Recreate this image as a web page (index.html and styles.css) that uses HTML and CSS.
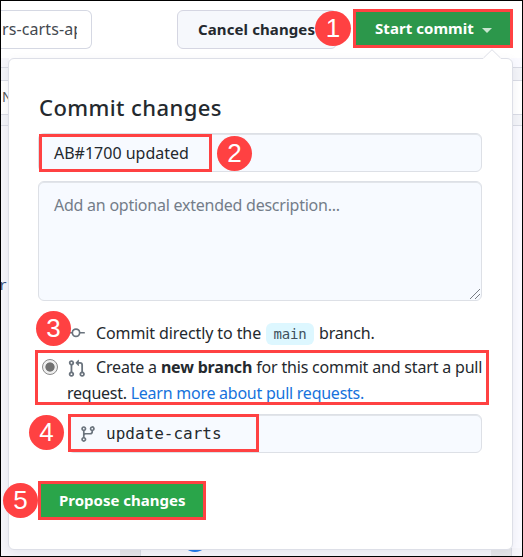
FILE: index.html
```html
<!DOCTYPE html>
<html lang="en">
<head>
<meta charset="utf-8">
<title>Commit changes</title>
<link rel="stylesheet" href="styles.css">
</head>
<body>
<div class="page">
  <header class="toolbar">
    <div class="filename"><span>rs-carts-ap</span></div>
    <div class="cancel">Cancel changes</div>
    <div class="start">Start commit <i class="caret"></i></div>
  </header>
  <div class="editor">
    <div class="tab-line"></div>
    <div class="tab-select">N</div>
    <div class="tab-line last"></div>
    <div class="code">r</div>
  </div>
  <div class="bottom"><div class="scrollbar"></div><div class="side"><i class="avatar"></i></div><div class="scrollbar end"></div></div>

  <section class="popover">
    <svg class="arrow" width="18" height="10" viewBox="0 0 18 10"><path d="M0 9.5 9 .7 18 9.5V10H0z" fill="#fff"/><path d="M.5 9 9 .7 17.5 9" fill="none" stroke="#dddfe7"/></svg>
    <h1>Commit changes</h1>
    <div class="field summary"><span>AB#1700 updated</span></div>
    <div class="field description"><span>Add an optional extended description...</span>
      <svg class="grip" width="12" height="12" viewBox="0 0 12 12"><path d="M1 11 11 1M6 11l5-5" stroke="#777b82" fill="none"/></svg>
    </div>
    <div class="option direct">
      <svg class="icon" width="18" height="18" viewBox="0 0 16 16"><path fill-rule="evenodd" d="M10.5 7.75a2.5 2.5 0 1 1-5 0 2.5 2.5 0 0 1 5 0Zm1.43.75a4.002 4.002 0 0 1-7.86 0H.75a.75.75 0 1 1 0-1.5h3.32a4.001 4.001 0 0 1 7.86 0h3.32a.75.75 0 1 1 0 1.5h-3.32Z"/></svg>
      <span class="direct-a">Commit directly to the</span><code>main</code><span class="direct-b">branch.</span>
    </div>
    <div class="option create">
      <i class="radio"></i>
      <svg class="icon" width="19" height="19" viewBox="0 0 16 16"><path fill-rule="evenodd" d="M7.177 3.073 9.573.677A.25.25 0 0 1 10 .854v4.792a.25.25 0 0 1-.427.177L7.177 3.427a.25.25 0 0 1 0-.354ZM3.75 2.5a.75.75 0 1 0 0 1.5.75.75 0 0 0 0-1.5Zm-2.25.75a2.25 2.25 0 1 1 3 2.122v5.256a2.251 2.251 0 1 1-1.5 0V5.372A2.25 2.25 0 0 1 1.5 3.25ZM11 2.5h-1V4h1a1 1 0 0 1 1 1v5.628a2.251 2.251 0 1 0 1.5 0V5A2.5 2.5 0 0 0 11 2.5Zm1 10.25a.75.75 0 1 1 1.5 0 .75.75 0 0 1-1.5 0ZM3.75 12a.75.75 0 1 0 0 1.5.75.75 0 0 0 0-1.5Z"/></svg>
      <span class="create-a">Create a <b>new branch</b> for this commit and start a pull</span>
    </div>
    <div class="more"><span>request. <a>Learn more about pull requests.</a></span></div>
    <div class="field branch">
      <svg class="icon" width="18" height="18" viewBox="0 0 16 16"><path fill-rule="evenodd" d="M11.75 2.5a.75.75 0 1 0 0 1.5.75.75 0 0 0 0-1.5Zm-2.25.75a2.25 2.25 0 1 1 3 2.122V6A2.5 2.5 0 0 1 10 8.5H6a1 1 0 0 0-1 1v1.128a2.251 2.251 0 1 1-1.5 0V5.372a2.25 2.25 0 1 1 1.5 0v1.836A2.492 2.492 0 0 1 6 7h4a1 1 0 0 0 1-1v-.628A2.25 2.25 0 0 1 9.5 3.25ZM4.25 12a.75.75 0 1 0 0 1.5.75.75 0 0 0 0-1.5ZM3.5 3.25a.75.75 0 1 1 1.5 0 .75.75 0 0 1-1.5 0Z"/></svg>
      <span>update-carts</span>
    </div>
    <div class="propose"><span>Propose changes</span></div>
  </section>

  <div class="mark mark-summary"></div>
  <div class="mark mark-create"></div>
  <div class="mark mark-branch"></div>
  <div class="step s1">1</div>
  <div class="step s2">2</div>
  <div class="step s3">3</div>
  <div class="step s4">4</div>
  <div class="step s5">5</div>
</div>
</body>
</html>
```
FILE: styles.css
```css
* { box-sizing: border-box; }
body { margin: 0; }
.page {
  position: relative; width: 523px; height: 557px; overflow: hidden;
  border: 1px solid #000; background: #fff; color: #24292e;
  font: 16px/24px "Noto Sans", sans-serif; white-space: nowrap;
  display: flex; flex-direction: column;
}
.toolbar { display: flex; height: 57px; padding-top: 8px; flex: none; }
.filename {
  width: 91px; height: 39px; margin-top: 1px; padding: 6px 0 0 1px;
  border: 1px solid #d5d8e3; border-left: 0; border-radius: 0 6px 6px 0; color: #444950;
}
.filename span { display: block; width: 75px; overflow: hidden; letter-spacing: .1px; }
.cancel {
  width: 160px; height: 39px; margin: 1px 0 0 85px; padding: 6px 0 0 20px;
  border: 1px solid #d5d6e2; border-radius: 6px; background: #f6f8fc; font-weight: 700; font-size: 15px; letter-spacing: .1px;
}
.start {
  width: 160px; height: 39px; margin-left: 16px; padding: 4px 0 0 19px;
  border: 3px solid #ff4142; background: #2c974b; color: #fff; font-weight: 700; font-size: 15px; letter-spacing: .05px;
}
.caret { display: inline-block; margin-left: 4px; vertical-align: 1px; border: 5px solid transparent; border-top-color: #c9e6d0; border-bottom: 0; }
.editor { flex: 1; background: linear-gradient(90deg, #f6f6fa 0 8px, #fff 8px 510px, #fafaff 510px); padding-top: 9px; }
.tab-line { height: 14px; border: solid #d9dbe4; border-width: 1px 0; background: #f3f4f8; }
.tab-select { height: 33px; padding: 4px 0 0 1px; background: #fff; color: #555; font-size: 14px; }
.tab-line.last { height: 12px; }
.code { margin-top: 151px; color: #32507b; font: 14px/18px "Liberation Mono", monospace; margin-left: -2px; }
.bottom { display: flex; height: 8px; flex: none; background: #f6f6fa; }
.scrollbar { width: 21px; margin-left: 119px; background: #e6e6e8; border-right: 1px solid #d8dae2; }
.scrollbar.end { margin: 0; }
.side { width: 350px; padding-left: 41px; overflow: hidden; }
.avatar { display: block; width: 26px; height: 26px; margin-top: -22px; border-radius: 50%; background: #1675e8; }

.popover {
  position: absolute; left: 7px; top: 57px; width: 505px; height: 492px;
  padding: 33px 30px 0 29px; border: 1px solid #dddfe7; border-radius: 6px; background: #fff;
  box-shadow: 0 3px 10px rgba(120,120,160,.12);
}
.arrow { position: absolute; left: 474px; top: -10px; }
h1 { height: 41px; margin: 0 0 0 1px; font-size: 22px; line-height: 31px; font-weight: 500; letter-spacing: .42px; }
.field { border: 1px solid #dde0e6; border-radius: 6px; background: #f7faff; box-shadow: inset 0 1px 0 #e2e5ea; }
.summary { height: 39px; padding: 7px 15px; }
.description { position: relative; height: 120px; margin-top: 9px; padding: 11px 15px; color: #747d89; letter-spacing: -.24px; }
.grip { position: absolute; right: 0; bottom: 0; }
.icon { fill: #6a737d; flex: none; }
.option { display: flex; align-items: center; }
.direct { height: 24px; margin: 20px 0 0 29px; letter-spacing: -.1px; }
.direct-a { margin-left: 11px; }
.direct-b { letter-spacing: -.2px; }
code { width: 48px; height: 22px; margin: 1px 5px 0 5px; border-radius: 6px; background: #ddf7ff; text-align: center; font: 14px/22px "DejaVu Sans Mono", monospace; letter-spacing: -.2px; color: #40505c; }
.create { height: 24px; margin: 10px 0 0 4px; letter-spacing: -.18px; }
.radio { flex: none; width: 16px; height: 16px; border: 1px solid #888; border-radius: 50%; background: radial-gradient(circle, #707070 0 4.2px, #eee 5px); }
.create .icon { margin: 3px 10px 0 9px; }
.more { margin: 2px 0 0 29px; height: 24px; letter-spacing: -.25px; }
.more a { color: #1672dc; }
.branch { display: flex; align-items: center; height: 39px; margin: 9px 0 0 30px; padding-left: 10px; font: 16px "DejaVu Sans Mono", monospace; letter-spacing: 0; }
.branch span { margin-left: 9px; }
.propose { width: 168px; height: 39px; margin-top: 28px; padding: 4px 0 0 18px; border: 3px solid #ff4142; background: #2aa54a; color: #fff; font-weight: 700; font-size: 15px; }

/* Callouts laid over the form */
.mark { position: absolute; border: 3px solid #ff4142; }
.mark-summary { left: 38px; top: 133px; width: 173px; height: 38px; }
.mark-create { left: 34px; top: 349px; width: 454px; height: 55px; }
.mark-branch { left: 67px; top: 413px; width: 191px; height: 38px; }
.step { position: absolute; width: 35px; height: 35px; border-radius: 50%; background: #ff4142; color: #fff; text-align: center; font: 26px/35px "Liberation Sans", sans-serif; }
.s1 { left: 314px; top: 10px; width: 36px; }
.s2 { left: 216px; top: 135px; }
.s3 { left: 35px; top: 310px; }
.s4 { left: 28px; top: 414px; }
.s5 { left: 2px; top: 482px; }
```
